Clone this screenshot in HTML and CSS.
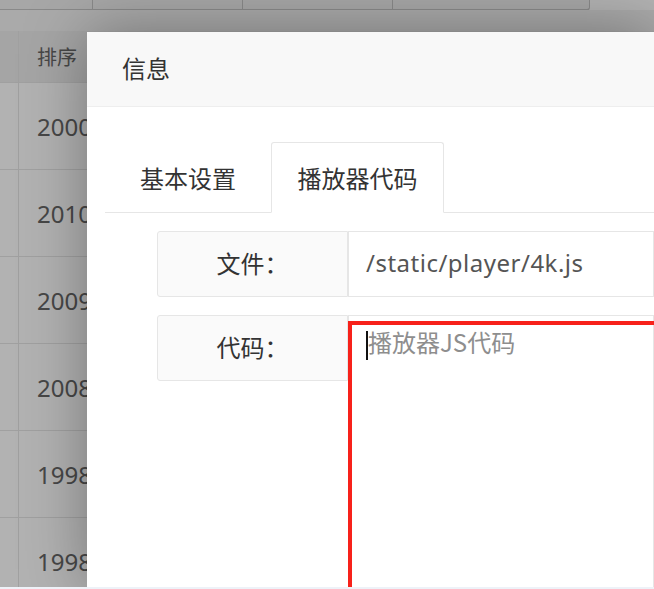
FILE: index.html
```html
<!DOCTYPE html>
<html lang="zh-CN">
<head>
<meta charset="utf-8">
<title>信息</title>
<link rel="stylesheet" href="styles.css">
</head>
<body>
<div class="page">
  <div class="btn-group">
    <div class="btn-cell w1"></div>
    <div class="btn-cell w2"></div>
    <div class="btn-cell w2"></div>
    <div class="btn-cell w3 last"></div>
  </div>
  <div class="band"></div>
  <div class="table">
    <div class="tr th"><div class="td chk"></div><div class="td val head">排序</div></div>
    <div class="tr"><div class="td chk"></div><div class="td val">2000</div></div>
    <div class="tr"><div class="td chk"></div><div class="td val">2010</div></div>
    <div class="tr"><div class="td chk"></div><div class="td val">2009</div></div>
    <div class="tr"><div class="td chk"></div><div class="td val">2008</div></div>
    <div class="tr"><div class="td chk"></div><div class="td val">1998</div></div>
    <div class="tr"><div class="td chk"></div><div class="td val">1998</div></div>
  </div>
</div>
<div class="shade"></div>
<div class="layer">
  <div class="layer-title">信息</div>
  <div class="layer-content">
    <div class="tab-title">
      <div class="tab">基本设置</div>
      <div class="tab active">播放器代码</div>
    </div>
    <div class="form">
      <div class="form-item">
        <div class="form-label">文件：</div>
        <div class="input">/static/player/4k.js</div>
      </div>
      <div class="form-item">
        <div class="form-label">代码：</div>
        <div class="textarea">
          <span class="caret"></span><span class="placeholder">播放器JS代码</span>
          <div class="highlight"></div>
        </div>
      </div>
    </div>
  </div>
</div>
<div class="bottom-edge"></div>
</body>
</html>
```
FILE: styles.css
```css
html, body {
  margin: 0;
  padding: 0;
}
body {
  width: 654px;
  height: 589px;
  position: relative;
  overflow: hidden;
  background: #fff;
  font-family: "Noto Sans", "Noto Sans CJK SC", sans-serif;
  color: #333;
}
.page {
  display: flex;
  flex-direction: column;
}
.btn-group {
  display: flex;
  height: 10px;
}
.btn-cell {
  height: 9px;
  background: #f0f0f0;
  border-bottom: 2px solid #c4c4c4;
  border-right: 1px solid #c4c4c4;
}
.w1 { width: 92px; }
.w2 { width: 149px; }
.w3 { width: 196px; }
.last { border-bottom-right-radius: 4px; }
.band {
  height: 21px;
  background: #f4f4f4;
}
.table {
  display: flex;
  flex-direction: column;
}
.tr {
  display: flex;
  height: 86px;
  border-bottom: 1px solid #e6e6e6;
}
.tr.th {
  height: 51px;
  background: #ececec;
}
.td.chk {
  width: 18px;
  border-right: 1px solid #e6e6e6;
}
.td.val {
  padding-left: 18px;
  display: flex;
  align-items: center;
  font-size: 24px;
  color: #666;
}
.td.head {
  font-size: 20px;
  font-family: "Noto Sans CJK SC", sans-serif;
}
.shade {
  position: absolute;
  inset: 0;
  background: rgba(0, 0, 0, 0.3);
}
.layer {
  position: absolute;
  left: 87px;
  top: 32px;
  width: 567px;
  height: 557px;
  overflow: hidden;
  background: #fff;
  box-shadow: 1px 1px 60px rgba(0, 0, 0, 0.35);
}
.layer-title {
  height: 74px;
  line-height: 72px;
  padding-left: 35px;
  background: #f8f8f8;
  border-bottom: 1px solid #eee;
  font-family: "Noto Sans CJK SC", sans-serif;
  font-size: 24px;
  color: #333;
}
.layer-content {
  padding: 36px 0 0 18px;
}
.tab-title {
  display: flex;
  height: 69px;
  border-bottom: 1px solid #e6e6e6;
}
.tab {
  flex: none;
  width: 166px;
  height: 69px;
  line-height: 70px;
  text-align: center;
  font-family: "Noto Sans CJK SC", sans-serif;
  font-size: 24px;
  color: #333;
}
.tab.active {
  width: 171px;
  height: 69px;
  border: 1px solid #e6e6e6;
  border-bottom: 1px solid #fff;
  border-radius: 3px 3px 0 0;
  background: #fff;
  margin-top: -1px;
}
.form {
  padding: 18px 0 0 52px;
  display: flex;
  flex-direction: column;
  gap: 18px;
}
.form-item {
  display: flex;
  align-items: flex-start;
}
.form-label {
  width: 189px;
  height: 64px;
  line-height: 62px;
  text-align: center;
  background: #fafafa;
  border: 1px solid #e6e6e6;
  border-radius: 3px 0 0 3px;
  font-family: "Noto Sans CJK SC", sans-serif;
  font-size: 24px;
  color: #333;
  flex: none;
}
.input {
  flex: 1;
  height: 64px;
  line-height: 62px;
  border: 1px solid #e6e6e6;
  padding-left: 17px;
  font-size: 24px;
  letter-spacing: 0.5px;
  color: #555;
  white-space: nowrap;
}
.textarea {
  position: relative;
  flex: 1;
  height: 300px;
  border: 1px solid #e6e6e6;
  padding: 15px 0 0 17px;
  display: flex;
  align-items: flex-start;
  font-family: "Noto Sans CJK SC", sans-serif;
  font-size: 24px;
  line-height: 28px;
  color: #999;
}
.caret {
  width: 2px;
  height: 29px;
  background: #111;
}
.placeholder {
  color: #8e8e8e;
  margin-top: -3px;
}
.highlight {
  position: absolute;
  left: -1px;
  top: 5px;
  right: -20px;
  bottom: -20px;
  border: 4px solid #f7211a;
}
.bottom-edge {
  position: absolute;
  left: 0;
  right: 0;
  bottom: 0;
  height: 2px;
  background: #eef2f8;
}
```
